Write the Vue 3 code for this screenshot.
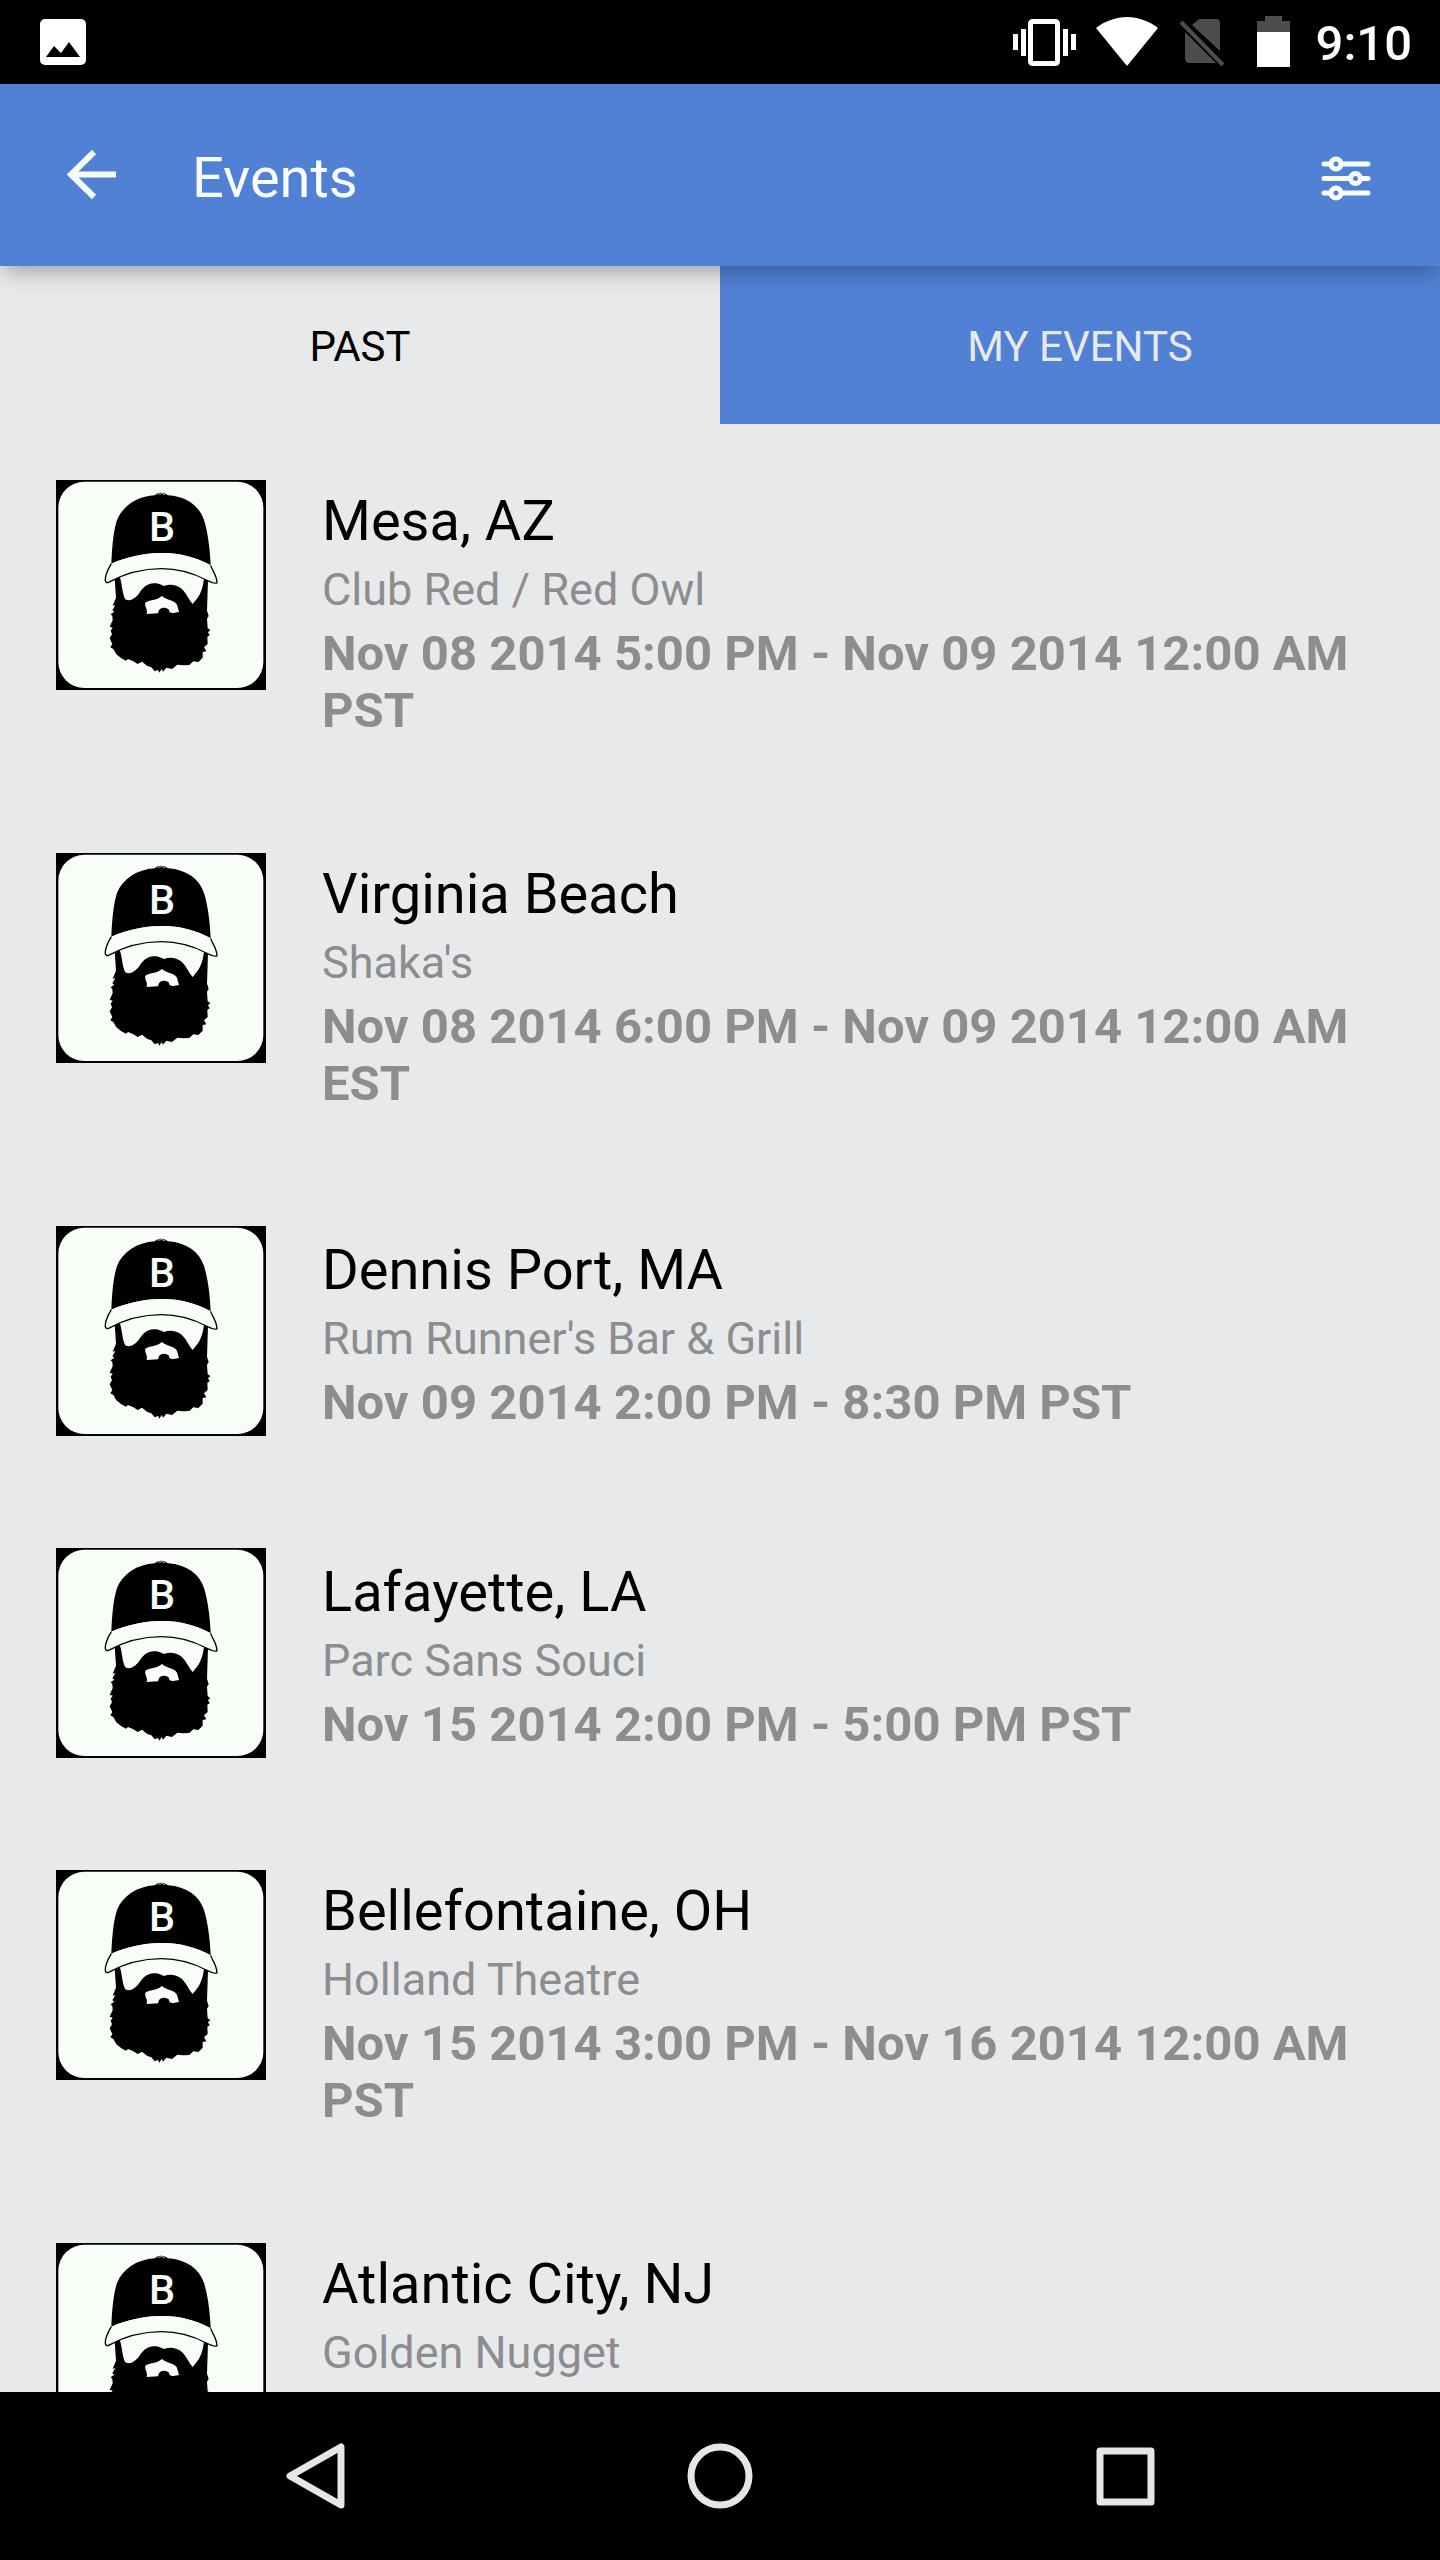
<script setup>
import { ref } from 'vue'

const tabs = [
  { id: 'past', label: 'PAST' },
  { id: 'mine', label: 'MY EVENTS' },
]
const activeTab = ref('past')

const events = [
  { city: 'Mesa, AZ', venue: 'Club Red / Red Owl', date: 'Nov 08 2014 5:00 PM - Nov 09 2014 12:00 AM PST' },
  { city: 'Virginia Beach', venue: "Shaka's", date: 'Nov 08 2014 6:00 PM - Nov 09 2014 12:00 AM EST' },
  { city: 'Dennis Port, MA', venue: "Rum Runner's Bar & Grill", date: 'Nov 09 2014 2:00 PM - 8:30 PM PST' },
  { city: 'Lafayette, LA', venue: 'Parc Sans Souci', date: 'Nov 15 2014 2:00 PM - 5:00 PM PST' },
  { city: 'Bellefontaine, OH', venue: 'Holland Theatre', date: 'Nov 15 2014 3:00 PM - Nov 16 2014 12:00 AM PST' },
  { city: 'Atlantic City, NJ', venue: 'Golden Nugget' },
]
</script>

<template>
  <div class="screen">
    <div class="status">
      <svg class="photo" width="46" height="46" viewBox="0 0 46 46" aria-hidden="true">
        <rect width="46" height="46" rx="5" fill="#fff" />
        <path d="M6 38 14 27l7 7 8-11 11 15z" fill="#000" />
      </svg>
      <svg width="64" height="50" viewBox="0 0 64 50" aria-hidden="true">
        <rect x="18.500" y="4.500" width="27" height="42" rx="2" fill="none" stroke="#fff" stroke-width="5" />
        <path d="M1 17h5v16H1zM9 12h5v27H9zM51 12h5v27h-5zM59 17h5v16h-5z" fill="#fff" />
      </svg>
      <svg width="62" height="50" viewBox="0 0 62 50" aria-hidden="true">
        <path d="M31 49 0 11C9 4 20 0 31 0s22 4 31 11z" fill="#fff" />
      </svg>
      <svg width="48" height="50" viewBox="0 0 48 50" aria-hidden="true">
        <path d="M21 2h17q4 0 4 4v28L14 8zM7 15l31 31H12q-5 0-5-5z" fill="#4d4d4d" />
        <path d="M3 5 45 48" stroke="#4d4d4d" stroke-width="4" />
      </svg>
      <svg width="50" height="52" viewBox="0 0 50 52" aria-hidden="true">
        <path d="M11 5h8V0h17v5h8v12H11z" fill="#4d4d4d" />
        <path d="M11 16h33v35H11z" fill="#fff" />
      </svg>
      <time class="clock">9:10</time>
    </div>

    <header class="appbar">
      <button class="icon-button" type="button" aria-label="Back">
        <svg width="52" height="56" viewBox="0 0 52 56">
          <path d="M28 2 5 24.500 28 47M5 24.500h45" fill="none" stroke="#f8fdfb" stroke-width="6" />
        </svg>
      </button>
      <h1>Events</h1>
      <button class="icon-button" type="button" aria-label="Filter">
        <svg width="52" height="48" viewBox="0 0 52 48">
          <path d="M4 10h44M4 24.500h44M4 39h44" stroke="#f8fdfb" stroke-width="5" stroke-linecap="round" />
          <g fill="#5181d5" stroke="#f8fdfb" stroke-width="5">
            <circle cx="16" cy="10" r="5" />
            <circle cx="35.500" cy="24.500" r="5" />
            <circle cx="16" cy="39" r="5" />
          </g>
        </svg>
      </button>
    </header>

    <div class="tabs" role="tablist">
      <button
        v-for="tab in tabs"
        :key="tab.id"
        type="button"
        role="tab"
        :aria-selected="activeTab === tab.id"
        :class="['tab', { active: activeTab === tab.id }]"
        @click="activeTab = tab.id"
      >{{ tab.label }}</button>
    </div>

    <ul class="list">
      <li v-for="event in events" :key="event.city">
        <a class="event" href="#">
          <svg class="avatar" viewBox="48 60 630 630" aria-hidden="true">
            <rect x="48" y="60" width="630" height="630" fill="#000" />
            <rect x="55" y="65" width="615" height="619" rx="78" fill="#f8fdf8" />
            <!-- cap -->
            <path d="M344 106Q352 97 364 98T384 106C440 110 478 138 492 180C503 215 510 265 512 316C468 291 415 278 363 279C310 280 260 291 214 311C216 262 220 214 231 180C249 137 290 110 344 106z" fill="#000" />
            <path d="M353 103q11-5 22 1" fill="none" stroke="#f8fdf8" stroke-width="2" />
            <text x="366" y="244" text-anchor="middle" class="cap-letter">B</text>
            <!-- beard -->
            <path d="M224 354L240 353C247 375 247 402 256 418C270 426 285 415 296 402C307 385 320 369 344 370C358 370 364 376 372 378C389 371 408 373 423 385C439 398 446 420 458 432C466 421 475 412 480 401C488 385 490 370 492 357L504 360L501 452L506 468L501 476L503 505L511 510L504 517L509 526L502 530L503 552L492 562L499 574L488 576L488 593L475 606L460 604L448 615L430 616L412 614L396 627L379 623L369 635L365 627L358 638L354 630L344 634L334 622L322 618L306 605L293 612L280 604L264 597L258 602L244 595L229 583L220 567L211 562L217 552L209 535L216 523L212 512L218 503L209 500L218 481L217 468L212 463L223 455L217 451L226 435L218 437L228 413z" fill="#000" />
            <path d="M320 462C324 447 313 440 316 428C328 418 349 423 366 408C380 421 404 420 411 434L417 456L400 459C391 458 387 457 387 449C377 441 362 441 357 451L354 460z" fill="#f8fdf8" />
            <!-- brim -->
            <path d="M214 311C260 291 310 280 363 279C415 278 468 291 512 316C517 332 530 345 531 368C525 373 511 366 499 360C455 337 410 326 364 326C315 326 260 337 204 368C193 369 195 354 199 342Q204 327 214 311z" fill="#f8fdf8" />
            <path d="M214 311Q204 327 199 342C195 354 193 369 204 368C260 337 315 326 364 326C410 326 455 337 499 360C511 366 525 373 531 368C530 345 517 332 512 316" fill="none" stroke="#000" stroke-width="4" />
          </svg>
          <div :class="['details', { undated: !event.date }]">
            <h2>{{ event.city }}</h2>
            <p class="venue">{{ event.venue }}</p>
            <p v-if="event.date" class="date">{{ event.date }}</p>
          </div>
        </a>
      </li>
    </ul>

    <nav class="navbar">
      <button type="button" aria-label="Back">
        <svg width="66" height="66" viewBox="0 0 66 66">
          <path d="M58 4v58L7 33z" transform="translate(1)" />
        </svg>
      </button>
      <button type="button" aria-label="Home">
        <svg width="66" height="66" viewBox="0 0 66 66"><circle cx="33" cy="33" r="29" /></svg>
      </button>
      <button type="button" aria-label="Recent apps">
        <svg width="66" height="66" viewBox="0 0 66 66"><rect x="8" y="8" width="51" height="51" /></svg>
      </button>
    </nav>
  </div>
</template>

<style>
body {
  margin: 0;
  background: #e8e9eb;
}
</style>

<style scoped>
.screen {
  display: flex;
  flex-direction: column;
  height: 100vh;
  overflow: hidden;
  background: #e8e9eb;
  font-family: Roboto, sans-serif;
  color: #000;
}

button {
  padding: 0;
  border: 0;
  background: none;
  font: inherit;
  color: inherit;
}

svg {
  display: block;
  flex: none;
}

.status {
  display: flex;
  flex: none;
  align-items: center;
  gap: 20px;
  height: 84px;
  padding: 0 28px 0 40px;
  background: #000;
  color: #fff;
}

.photo {
  margin-right: auto;
}

.clock {
  font-size: 49px;
  font-weight: 500;
  line-height: 60px;
  padding-top: 4px;
}

.appbar {
  position: relative;
  z-index: 1;
  display: flex;
  flex: none;
  align-items: center;
  height: 176px;
  padding: 6px 68px 0 66px;
  background: #5181d5;
  box-shadow: 0 10px 20px -4px rgba(0, 0, 0, 0.3);
  color: #f8fdfb;
}

h1 {
  flex: 1;
  margin: 0 0 0 74px;
  font-size: 56px;
  font-weight: 400;
  line-height: 66px;
}

.tabs {
  display: flex;
  flex: none;
  height: 158px;
}

.tab {
  flex: 1;
  padding-top: 2px;
  background: #5181d5;
  color: #e8e9eb;
  font-size: 42px;
}

.tab.active {
  background: #e8e9eb;
  color: #000;
}

.list {
  flex: 1;
  min-height: 0;
  margin: 0;
  padding: 0;
  overflow: hidden;
  list-style: none;
}

.event {
  display: flex;
  align-items: center;
  gap: 56px;
  padding: 56px;
  color: inherit;
  text-decoration: none;
}

.avatar {
  align-self: flex-start;
  width: 210px;
  height: 210px;
}

.cap-letter {
  fill: #f8fdf8;
  font-family: Roboto, sans-serif;
  font-size: 124px;
  font-weight: 500;
}

.details {
  display: flex;
  flex: 1;
  flex-direction: column;
  gap: 8px;
  padding: 8px 0 2px;
}

.details.undated {
  align-self: flex-start;
}

h2,
p {
  margin: 0;
}

h2 {
  font-size: 56px;
  font-weight: 400;
  line-height: 66px;
}

.venue {
  color: #8c8d8f;
  font-size: 45px;
  line-height: 55px;
}

.date {
  color: #8c8d8f;
  font-size: 49px;
  font-weight: 700;
  line-height: 57px;
}

.navbar {
  display: flex;
  flex: none;
  height: 168px;
  padding: 0 112px;
  background: #000;
}

.navbar button {
  display: flex;
  flex: 1;
  align-items: center;
  justify-content: center;
}

.navbar svg {
  fill: none;
  stroke: #e6e6e6;
  stroke-width: 7;
  stroke-linejoin: round;
}
</style>
